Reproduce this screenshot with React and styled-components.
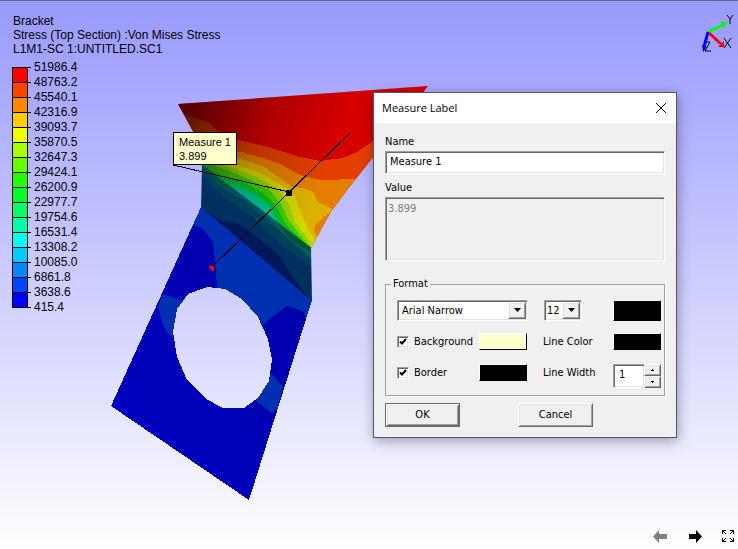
import React from "react";
import styled, { createGlobalStyle, css } from "styled-components";

const GlobalStyle = createGlobalStyle`
  * { box-sizing: border-box; }
  body { margin: 0; }
`;

const Viewport = styled.main`
  position: relative;
  display: flex;
  flex-direction: column;
  min-height: 100vh;
  overflow: hidden;
  border-top: 1px solid #666a78;
  background: linear-gradient(#9999ff, #ffffff);
  color: #000;
  font: 12px/14px "Liberation Sans", Arial, sans-serif;
`;

const TopRow = styled.header`
  display: flex;
  justify-content: space-between;
  align-items: flex-start;
  flex: 1;
`;

const Legend = styled.section`
  padding: 13px 0 0 12px;
`;

const LegendLine = styled.div`
  padding-left: 1px;
  white-space: nowrap;
`;

const Scale = styled.div`
  display: flex;
  align-items: flex-start;
  margin-top: 4px;
`;

const Bands = styled.div`
  width: 16px;
  margin-top: 7px;
  border: 1px solid #000;
  border-top: 0;
`;

const Band = styled.div`
  height: 15px;
  border-top: 1px solid #000;
  background: ${(p) => p.$color};
`;

const Ticks = styled.div`
  width: 3px;
  margin-top: 7px;
`;

const Tick = styled.div`
  height: 15px;
  border-top: 1px solid #000;
`;

const ScaleValues = styled.ul`
  margin: 0;
  padding: 0 0 0 3px;
  list-style: none;
  line-height: 15px;
`;

const Triad = styled.svg`
  display: block;
  width: 48px;
  height: 60px;
`;

const Model = styled.svg`
  position: absolute;
  left: 0;
  top: -1px;
  width: 440px;
  height: 510px;
`;

const Callout = styled.div`
  position: absolute;
  left: 173px;
  top: 131px;
  padding: 2px 5px 1px;
  border: 1px solid #000;
  background: #ffffcc;
  line-height: 14px;
  font-size: 11px;
  white-space: nowrap;
`;

const Navigation = styled.nav`
  display: flex;
  justify-content: flex-end;
  gap: 20px;
  padding: 0 4px 6px 0;
`;

const NavButton = styled.button`
  display: flex;
  padding: 0;
  border: 0;
  background: none;
  color: ${(p) => (p.disabled ? "#808080" : "#000")};
`;

const Dialog = styled.form`
  position: absolute;
  left: 373px;
  top: 91px;
  width: 304px;
  border: 1px solid #55556a;
  background: #f0f0f0;
  box-shadow: 1px 3px 12px rgba(0, 0, 0, 0.35);
  font: 11px/14px "DejaVu Sans Condensed", Tahoma, sans-serif;

  input, select, textarea, button { font: inherit; color: inherit; }
`;

const TitleBar = styled.div`
  display: flex;
  align-items: center;
  justify-content: space-between;
  height: 30px;
  padding: 0 10px 0 8px;
  background: #fff;
`;

const Title = styled.h1`
  margin: 0;
  font: 11px/16px "Open Sans", "Segoe UI", sans-serif;
`;

const CloseButton = styled.button`
  display: flex;
  padding: 0;
  border: 0;
  background: none;
`;

const Body = styled.div`
  display: flex;
  flex-direction: column;
  padding: 12px 11px 10px;
`;

const sunken = css`
  border: 1px solid;
  border-color: #a0a0a0 #fff #fff #a0a0a0;
  box-shadow: inset 1px 1px #696969, inset -1px -1px #e3e3e3;
`;

const raised = css`
  border: 1px solid;
  border-color: #fff #696969 #696969 #fff;
  box-shadow: inset 1px 1px #e3e3e3, inset -1px -1px #a0a0a0;
`;

const FieldLabel = styled.label`
  margin-bottom: 2px;
`;

const TextField = styled.input`
  ${sunken}
  width: 100%;
  height: 23px;
  margin-bottom: 7px;
  padding: 0 4px 2px;
  border-radius: 0;
  background: #fff;
  outline: 0;
`;

const ValueArea = styled.textarea`
  ${sunken}
  width: 100%;
  height: 64px;
  padding: 4px 2px;
  border-radius: 0;
  background: #f0f0f0;
  resize: none;

  &&:disabled { color: #808080; }
`;

const Format = styled.fieldset`
  display: grid;
  grid-template-columns: 82px 49px 1fr auto;
  grid-template-rows: 21px 19px 24px;
  row-gap: 12px;
  align-items: start;
  min-width: 0;
  margin: 16px 0 7px;
  padding: 9px 3px 7px 11px;
  border: 1px solid #a0a0a0;
  box-shadow: 1px 1px #fff;
`;

const FormatLegend = styled.legend`
  margin-left: -6px;
  padding: 0 2px;
`;

const Combo = styled.div`
  ${sunken}
  display: grid;
  grid-template-columns: 1fr 18px;
  grid-column: ${(p) => (p.$wide ? "1 / 3" : "auto")};
  width: ${(p) => (p.$wide ? "131px" : "38px")};
  height: 21px;
  margin-left: ${(p) => (p.$wide ? "0" : "16px")};
  padding: 1px;
  background: #fff;
`;

const ComboSelect = styled.select`
  grid-area: 1 / 1 / 2 / 3;
  width: 100%;
  padding: 0 0 0 ${(p) => (p.$wide ? "3px" : "1px")};
  border: 0;
  background: none;
  appearance: none;
  outline: 0;
`;

const ComboArrow = styled.span`
  ${raised}
  grid-area: 1 / 2;
  display: flex;
  align-items: center;
  justify-content: center;
  background: #f0f0f0;
  pointer-events: none;
`;

const CheckLabel = styled.label`
  display: flex;
  align-items: center;
  gap: 5px;
  height: 17px;
`;

const CheckBox = styled.input`
  ${sunken}
  appearance: none;
  width: 12px;
  height: 12px;
  margin: 0;
  background: #fff;

  &:checked {
    background: #fff url("data:image/svg+xml,%3Csvg xmlns='http://www.w3.org/2000/svg' viewBox='0 0 10 10'%3E%3Cpath d='M2 4.5 4 6.5 8 2' fill='none' stroke='black' stroke-width='2'/%3E%3C/svg%3E") center / 10px 10px no-repeat;
  }
`;

const ColorButton = styled.button`
  width: 48px;
  height: ${(p) => (p.$tall ? "21px" : "17px")};
  padding: 0;
  border: 1px solid;
  border-color: #fff #000 #000 #fff;
  background: ${(p) => p.$color};
`;

const LineLabel = styled.label`
  padding-left: 15px;
  line-height: 17px;
  white-space: nowrap;
`;

const Spinner = styled.div`
  display: grid;
  grid-template-columns: 1fr 17px;
  grid-template-rows: 1fr 1fr;
  width: 48px;
  height: 24px;
`;

const SpinInput = styled.input`
  ${sunken}
  grid-row: 1 / 3;
  min-width: 0;
  width: 100%;
  padding: 0 0 2px 5px;
  border-right: 0;
  border-radius: 0;
  background: #fff;
  outline: 0;
`;

const SpinButton = styled.button`
  ${raised}
  display: flex;
  align-items: center;
  justify-content: center;
  min-height: 0;
  padding: 0;
  background: #f0f0f0;
`;

const Actions = styled.div`
  display: flex;
  gap: 58px;
`;

const ActionButton = styled.button`
  ${raised}
  width: 75px;
  height: 24px;
  padding: 0;
  background: #f0f0f0;
  ${(p) => p.$default && css`
    border-color: #696969;
    box-shadow: inset 1px 1px #fff, inset -1px -1px #696969, inset 2px 2px #e3e3e3, inset -2px -2px #a0a0a0;
  `}
`;

const bandColors = [
  "#ff0000", "#ff4400", "#ff8800", "#ffcc00", "#eeff00", "#aaff00", "#66ff00", "#22ff00",
  "#00ff22", "#00ff66", "#00ffaa", "#00ffee", "#00ccff", "#0088ff", "#0044ff", "#0000ff",
];

const scaleValues = [
  "51986.4", "48763.2", "45540.1", "42316.9", "39093.7", "35870.5", "32647.3", "29424.1", "26200.9",
  "22977.7", "19754.6", "16531.4", "13308.2", "10085.0", "6861.8", "3638.6", "415.4",
];

function ColorScale() {
  return (
    <Scale>
      <Bands>{bandColors.map((c) => <Band key={c} $color={c} />)}</Bands>
      <Ticks>{scaleValues.map((v) => <Tick key={v} />)}</Ticks>
      <ScaleValues>{scaleValues.map((v) => <li key={v}>{v}</li>)}</ScaleValues>
    </Scale>
  );
}

function AxisTriad() {
  return (
    <Triad viewBox="0 0 48 60" aria-label="Axes" fill="none">
      <path d="M18 31 33 24" stroke="#0f0" strokeWidth="3" />
      <path d="M31 20 38 22 33 27Z" fill="#0f0" />
      <path d="M19 32 31 43" stroke="#f00" strokeWidth="3" />
      <path d="M34 40V46H28Z" fill="#f00" />
      <path d="M18 31 14 46" stroke="#00f" strokeWidth="3" />
      <path d="M12 44 17 46 13 51Z" fill="#00f" />
      <path d="M37 14 40 18V23M43 14 40 18M34 37 41 47M41 37 34 47M14 41H20L15 50H21" stroke="#000" />
    </Triad>
  );
}

function BracketModel() {
  return (
    <Model viewBox="0 0 440 510" shapeRendering="crispEdges" aria-label="Bracket stress plot">
      <defs>
        <linearGradient id="shade" gradientUnits="userSpaceOnUse" x1="190" y1="115" x2="325" y2="170">
          <stop offset="0" stopColor="#000" stopOpacity=".62" />
          <stop offset=".5" stopColor="#000" stopOpacity=".25" />
          <stop offset="1" stopColor="#000" stopOpacity=".08" />
        </linearGradient>
        <linearGradient id="plate" x1="0" y1="1" x2="1" y2="0">
          <stop offset="0" stopColor="#0000c4" />
          <stop offset="1" stopColor="#0000a4" />
        </linearGradient>
        <clipPath id="flange">
          <path d="M178 104 428 86 374 156 347 190 330 213 317 237 311 248 202 167 201 146Z" />
        </clipPath>
        <clipPath id="bend">
          <path d="M202 165 311 248 312 302 201 208Z" />
        </clipPath>
      </defs>
      <g clipPath="url(#flange)">
        <path fill="#e80000" d="M170 80H430V260H170Z" />
        <path fill="#f84400" d="M180 112 190 117 208 122 218 131 238 140 268 147 300 157 320 161 343 158 357 152 380 136V260H180Z" />
        <path fill="#f88800" d="M180 130 237 151 259 157 280 164 300 175 320 180 360 179V260H180Z" />
        <path fill="#f0c000" d="M180 145 237 158 263 166 280 178 292 187 304 188 313 192 318 202 334 210 322 218 315 225 314 232 320 240 300 260 180 200Z" />
        <path fill="#e4e800" d="M180 150 237 165 262 174 284 187 295 196 300 210 307 227 315 240 305 260 180 200Z" />
        <path fill="#a0e800" d="M180 154 230 167 257 177 278 189 288 203 295 222 311 243V260L180 200Z" />
        <path fill="#48e000" d="M180 156 225 169 251 180 270 190 281 204 289 221 312 249V260L180 200Z" />
        <path fill="#00d820" d="M190 160 222 175 245 183 263 193 277 207 285 223 301 240 180 200Z" />
        <path fill="#00d870" d="M215 175 233 183 252 192 270 206 279 224 270 230Z" />
        <path fill="#00d8a8" d="M226 183 247 192 263 202 273 212 278 225Z" />
        <path fill="url(#shade)" d="M170 80H430V260H170Z" />
      </g>
      <g clipPath="url(#bend)">
        <path fill="#003060" d="M190 160H320V310H190Z" />
        <path fill="#004058" d="M202 165 202 174 223 197 250 215 278 243 311 266V240L230 170Z" />
        <path fill="#005060" d="M202 165 220 187 244 200 269 223 287 235 311 257V240Z" />
        <path fill="#006064" d="M212 173 240 195 262 211 285 236 311 258V247Z" />
        <path fill="#005038" d="M202 165 235 191 222 187Z" />
        <path fill="#005038" d="M275 220 312 247V253L291 240Z" />
        <path fill="#001858" d="M201 208 223 221 239 224 257 237 281 257 291 275 312 302 300 310 190 210Z" />
      </g>
      <path fillRule="evenodd" fill="url(#plate)" d="M201 207 312 301 306 319 249 500 111 406ZM207 287 188 294 177 309 173 332 177 357 187 380 206 399 223 408H244L258 398 269 381 272 360 268 339 258 317 242 299 225 289Z" />
      <g fill="#0030b0">
        <path d="M201 207 312 301 306 317 303 311 287 306 272 317 263 325 258 317 242 299 225 289 217 288 215 260 213 242 208 235 200 227 193 225Z" />
        <path d="M163 294 183 301 177 309 173 332V338L168 334 163 325 158 307Z" />
        <path d="M271 373 283 387 278 407 272 413 256 401 258 398 269 381Z" />
      </g>
      <g stroke="#000" fill="none">
        <path d="M173 165 289 192M350 133 212 267" />
        <path fill="#000" d="M286 190H291V195H286Z" />
      </g>
      <path fill="#f00" d="M209 266H214V271H212L209 268Z" />
    </Model>
  );
}

function DownArrow() {
  return <svg width="9" height="5" viewBox="0 0 9 5"><path d="M1 0H8L4.500 4Z" /></svg>;
}

function Spin({ up }) {
  return <svg width="3" height="2" viewBox="0 0 3 2" shapeRendering="crispEdges"><path d={up ? "M1 0H2V1H3V2H0V1H1Z" : "M0 0H3V1H2V2H1V1H0Z"} /></svg>;
}

function MeasureDialog() {
  return (
    <Dialog role="dialog" aria-labelledby="dialog-title" onSubmit={(e) => e.preventDefault()}>
      <TitleBar>
        <Title id="dialog-title">Measure Label</Title>
        <CloseButton type="button" aria-label="Close">
          <svg width="10" height="10" viewBox="0 0 10 10" stroke="#000"><path d="M0 0 10 10M10 0 0 10" /></svg>
        </CloseButton>
      </TitleBar>
      <Body>
        <FieldLabel htmlFor="name">Name</FieldLabel>
        <TextField id="name" defaultValue="Measure 1" />
        <FieldLabel htmlFor="value">Value</FieldLabel>
        <ValueArea id="value" disabled defaultValue="3.899" />
        <Format>
          <FormatLegend>Format</FormatLegend>
          <Combo $wide>
            <ComboSelect $wide aria-label="Font"><option>Arial Narrow</option></ComboSelect>
            <ComboArrow><DownArrow /></ComboArrow>
          </Combo>
          <Combo>
            <ComboSelect aria-label="Font size"><option>12</option></ComboSelect>
            <ComboArrow><DownArrow /></ComboArrow>
          </Combo>
          <ColorButton $tall type="button" $color="#000" aria-label="Text color" />

          <CheckLabel><CheckBox type="checkbox" defaultChecked />Background</CheckLabel>
          <ColorButton type="button" $color="#ffffcc" aria-label="Background color" />
          <LineLabel htmlFor="line-color">Line Color</LineLabel>
          <ColorButton id="line-color" type="button" $color="#000" />

          <CheckLabel><CheckBox type="checkbox" defaultChecked />Border</CheckLabel>
          <ColorButton type="button" $color="#000" aria-label="Border color" />
          <LineLabel htmlFor="line-width">Line Width</LineLabel>
          <Spinner>
            <SpinInput id="line-width" defaultValue="1" />
            <SpinButton type="button" aria-label="Increase"><Spin up /></SpinButton>
            <SpinButton type="button" aria-label="Decrease"><Spin /></SpinButton>
          </Spinner>
        </Format>
        <Actions>
          <ActionButton $default type="submit">OK</ActionButton>
          <ActionButton type="button">Cancel</ActionButton>
        </Actions>
      </Body>
    </Dialog>
  );
}

export default function App() {
  return (
    <>
      <GlobalStyle />
      <Viewport>
        <BracketModel />
        <TopRow>
          <Legend>
            <LegendLine>Bracket</LegendLine>
            <LegendLine>Stress (Top Section) :Von Mises Stress</LegendLine>
            <LegendLine>L1M1-SC 1:UNTITLED.SC1</LegendLine>
            <ColorScale />
          </Legend>
          <AxisTriad />
        </TopRow>
        <Callout>Measure 1<br />3.899</Callout>
        <MeasureDialog />
        <Navigation>
          <NavButton disabled aria-label="Previous">
            <svg width="15" height="13" viewBox="0 0 15 13" fill="currentColor"><path d="M0 6.500 6 0V4H14V9H6V13Z" /></svg>
          </NavButton>
          <NavButton aria-label="Next">
            <svg width="14" height="13" viewBox="0 0 14 13" fill="currentColor"><path d="M14 6.500 8 0V4H1V9H8V13Z" /></svg>
          </NavButton>
          <NavButton aria-label="Full screen">
            <svg width="12" height="12" viewBox="0 0 12 12" fill="none" stroke="currentColor">
              <path d="M.5 4V.5H4M8 .5H11.500V4M11.500 8V11.500H8M4 11.500H.5V8M1 1 4 4M11 1 8 4M11 11 8 8M1 11 4 8" />
            </svg>
          </NavButton>
        </Navigation>
      </Viewport>
    </>
  );
}
